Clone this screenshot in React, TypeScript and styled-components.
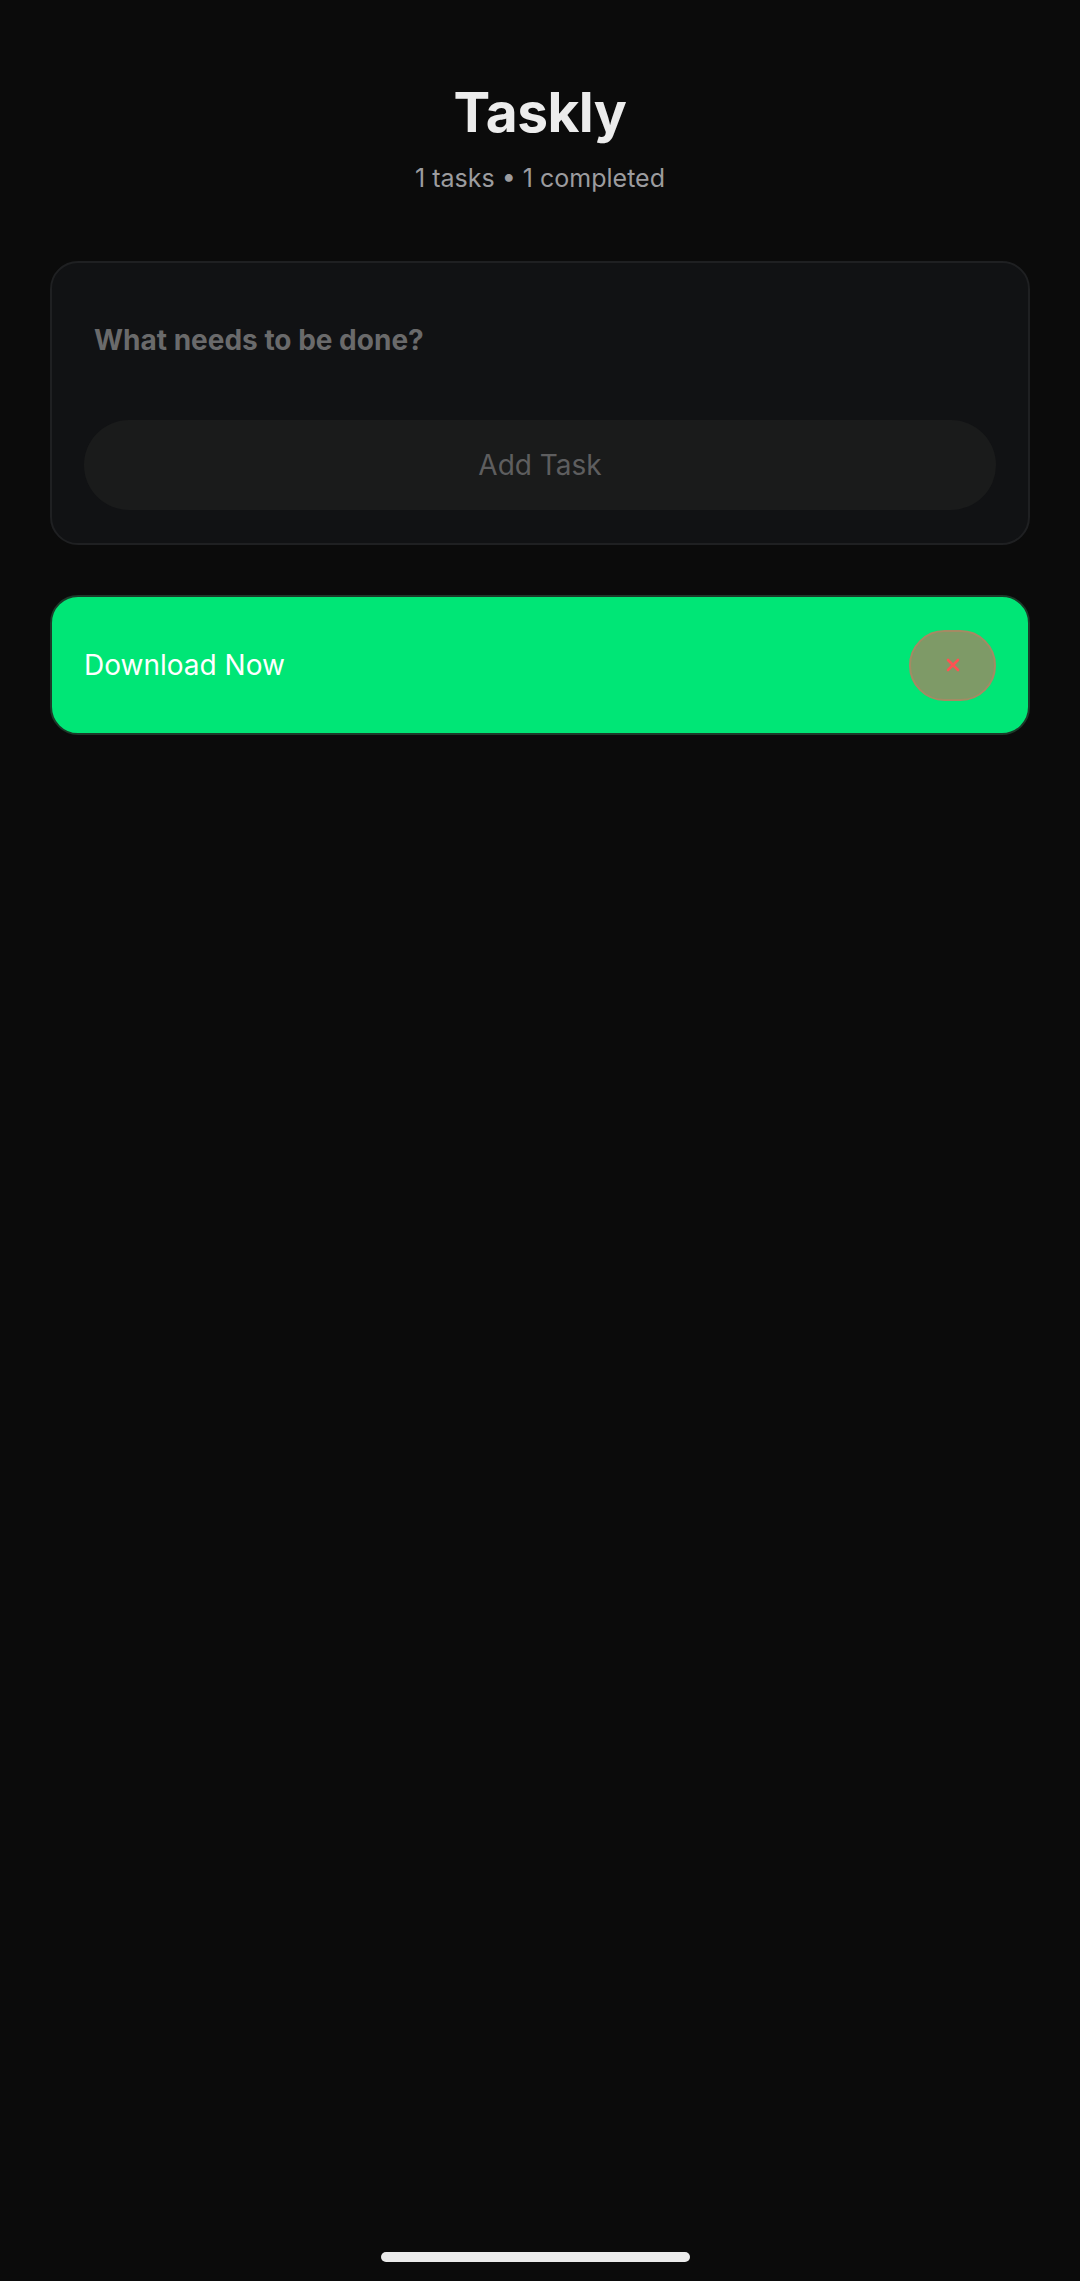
import React from "react";
import styled, { createGlobalStyle } from "styled-components";

const Global = createGlobalStyle`
  html, body {
    margin: 0;
    padding: 0;
    background: #0b0b0b;
  }
  body {
    font-family: Inter, "Noto Sans", "Liberation Sans", sans-serif;
    -webkit-font-smoothing: antialiased;
  }
  * { box-sizing: border-box; }
`;

const Page = styled.div`
  min-height: 2281px;
  display: flex;
  flex-direction: column;
  background: #0b0b0b;
  padding: 0 50px;
`;

const Header = styled.header`
  display: flex;
  flex-direction: column;
  align-items: center;
  padding-top: 79px;
`;

const Title = styled.h1`
  margin: 0;
  font-size: 55px;
  line-height: 66px;
  font-weight: 700;
  color: #ececec;
  letter-spacing: -0.5px;
`;

const Subtitle = styled.div`
  margin-top: 17px;
  font-size: 25px;
  line-height: 32px;
  color: #9c9c9f;
`;

const Card = styled.section`
  margin-top: 67px;
  background: #111214;
  border: 2px solid #1f2022;
  border-radius: 28px;
  padding: 37px 32px 33px;
  display: flex;
  flex-direction: column;
`;

const Input = styled.input`
  background: transparent;
  border: none;
  outline: none;
  padding: 0 10px;
  height: 80px;
  margin-bottom: 40px;
  font-family: inherit;
  font-size: 28px;
  font-weight: 650;
  color: #e0e0e0;
  &::placeholder {
    color: #6a6a6b;
    opacity: 1;
  }
`;

const AddButton = styled.button`
  height: 90px;
  border: none;
  border-radius: 45px;
  background: #1a1b1b;
  color: #5e5e5f;
  font-family: inherit;
  font-size: 28px;
  font-weight: 400;
`;

const Banner = styled.div`
  margin-top: 50px;
  height: 140px;
  background: #00e676;
  border: 2px solid #1d3a2a;
  border-radius: 28px;
  padding: 0 32px;
  display: flex;
  align-items: center;
  justify-content: space-between;
`;

const BannerText = styled.span`
  font-size: 28px;
  color: #ffffff;
`;

const CloseButton = styled.button`
  width: 87px;
  height: 71px;
  border-radius: 36px;
  background: #7e9a67;
  border: 2px solid #a58a63;
  display: flex;
  align-items: center;
  justify-content: center;
  padding: 0;
`;

const HomeBar = styled.div`
  margin-top: auto;
  margin-bottom: 19px;
  align-self: center;
  width: 309px;
  height: 10px;
  border-radius: 5px;
  background: #ebebeb;
  transform: translateX(-5px);
`;

export default function App() {
  return (
    <>
      <Global />
      <Page>
        <Header>
          <Title>Taskly</Title>
          <Subtitle>1 tasks • 1 completed</Subtitle>
        </Header>
        <Card>
          <Input placeholder="What needs to be done?" />
          <AddButton>Add Task</AddButton>
        </Card>
        <Banner>
          <BannerText>Download Now</BannerText>
          <CloseButton aria-label="close">
            <svg width="14" height="14" viewBox="0 0 14 14">
              <path d="M2 2 L12 12 M12 2 L2 12" stroke="#ff5252" strokeWidth="2.6" strokeLinecap="round" />
            </svg>
          </CloseButton>
        </Banner>
        <HomeBar />
      </Page>
    </>
  );
}
